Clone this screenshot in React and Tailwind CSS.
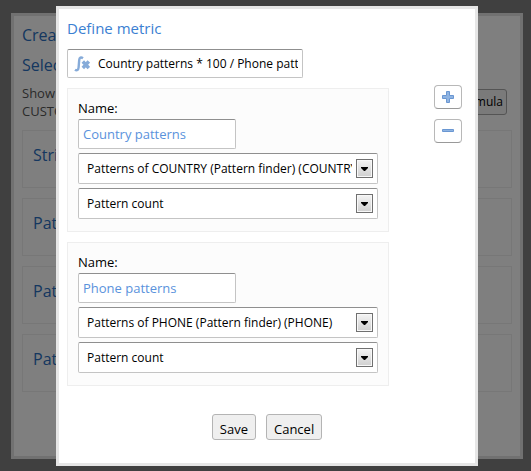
import { useId } from "react";

const cards = ["Stri", "Patt", "Patt", "Patt"];

const metrics = [
  { name: "Country patterns", source: "Patterns of COUNTRY (Pattern finder) (COUNTRY)" },
  { name: "Phone patterns", source: "Patterns of PHONE (Pattern finder) (PHONE)" },
];

const fieldBorder = "rounded-xs border border-[#c4c4c4] border-t-[#8f8f8f] bg-white";

function Dropdown({ label, value }) {
  return (
    <div className="relative mt-1">
      <select
        aria-label={label}
        defaultValue={value}
        className={`block h-[31px] w-full appearance-none pl-2 pr-[25px] text-xs text-black ${fieldBorder}`}
      >
        <option>{value}</option>
      </select>
      <span className="pointer-events-none absolute right-[5px] top-[6px] flex h-[19px] w-[17px] items-center justify-center border border-[#707070] bg-linear-to-b from-[#f4f4f4] to-[#cfcfcf] shadow-[inset_0_0_0_1px_#f8f8f8]">
        <svg width="7" height="4" viewBox="0 0 7 4" aria-hidden="true">
          <path d="M0 0h7v1L4 4H3L0 1z" fill="#000" />
        </svg>
      </span>
    </div>
  );
}

function MetricPanel({ name, source }) {
  const id = useId();
  return (
    <section className="mb-[10px] border border-[#eeeeee] bg-[#fcfcfc] px-[10px] pb-3 pt-[10px]">
      <label htmlFor={id} className="mb-px block text-[13px] leading-[19px] text-black">
        Name:
      </label>
      <input
        id={id}
        defaultValue={name}
        className={`block h-[30px] w-[158px] px-1 text-[13px] text-[#5a92dc] ${fieldBorder}`}
      />
      <Dropdown label={`${name} source`} value={source} />
      <Dropdown label={`${name} measure`} value="Pattern count" />
    </section>
  );
}

const squareButton =
  "flex h-6 w-7 items-center justify-center rounded border border-[#b8b8b8] border-b-[#999] bg-white";
const textButton =
  "h-[26px] rounded-[3px] border border-[#b4b4b4] bg-[#efefef] px-[7px] pt-1 text-[13px] leading-5 text-black";

export default function App() {
  return (
    <div className="min-h-screen bg-[#808080] pb-3 pl-[11px] pr-2 pt-[13px] font-['Open_Sans','Noto_Sans',sans-serif]">
      <div className="border-3 border-[#e2e2e2] bg-white px-2 pb-16 pt-2">
        <h1 className="text-base leading-[22px] text-[#2a6ec0]">Crea</h1>
        <h2 className="mt-2 text-base leading-[22px] text-[#2a6ec0]">Selec</h2>
        <div className="mt-2 flex items-start justify-between pr-[5px]">
          <p className="text-[13px] leading-[18px] text-[#555]">
            Show
            <br />
            CUSTO
          </p>
          <button className="mt-[5px] h-[26px] rounded-[3px] border border-[#a8a8a8] bg-[#f4f4f4] px-[3px] text-xs leading-5 text-black">
            Formula
          </button>
        </div>
        <div className="mt-[10px] flex flex-col gap-[10px]">
          {cards.map((card, i) => (
            <article key={i} className="h-[58px] border border-[#eeeeee] px-[10px] py-3">
              <h3 className="text-base leading-6 text-[#2a6ec0]">{card}</h3>
            </article>
          ))}
        </div>
      </div>

      <div className="fixed inset-0 flex items-start justify-center bg-black/50 pl-[3px] pt-[6px]">
        <div
          role="dialog"
          aria-labelledby="dialog-title"
          className="w-full max-w-[422px] border-3 border-[#e6e6e6] bg-white px-2 pb-[23px] pt-2"
        >
          <h2 id="dialog-title" className="text-[15px] leading-[22px] text-[#3b80d2]">
            Define metric
          </h2>
          <div className={`mt-[10px] flex h-[29px] w-[236px] items-center gap-2 pl-[6px] pr-1 ${fieldBorder}`}>
            <svg width="16" height="16" viewBox="0 0 16 16" fill="none" stroke="#86abd9" aria-hidden="true">
              <path d="M9 2.200C7 .8 5.400 1.500 5.200 4L4.600 11.500c-.2 2.500-1.800 3.500-3.600 2.200" strokeWidth="2.400" />
              <path d="M8.800 5.500l6 6.500M14.800 5.500l-6 6.500" strokeWidth="3.400" />
            </svg>
            <input
              aria-label="Formula"
              defaultValue="Country patterns * 100 / Phone patterns"
              className="min-w-0 flex-1 bg-transparent text-xs text-black"
            />
          </div>

          <div className="mt-[10px] flex items-start justify-between">
            <div className="w-[322px]">
              {metrics.map((metric) => (
                <MetricPanel key={metric.name} {...metric} />
              ))}
            </div>
            <div className="-mt-[3px] mr-[5px] flex flex-col gap-[10px]">
              <button aria-label="Add" className={squareButton}>
                <svg width="12" height="12" viewBox="0 0 12 12" aria-hidden="true">
                  <path d="M4.500.5h3v4h4v3h-4v4h-3v-4h-4v-3h4z" fill="#8fb4e2" stroke="#6a97d2" />
                </svg>
              </button>
              <button aria-label="Remove" className={squareButton}>
                <svg width="12" height="4" viewBox="0 0 12 4" aria-hidden="true">
                  <path d="M.5.5h11v2H.5z" fill="#8fb4e2" stroke="#6a97d2" />
                </svg>
              </button>
            </div>
          </div>

          <div className="mt-[18px] flex justify-center gap-[10px]">
            <button className={textButton}>Save</button>
            <button className={textButton}>Cancel</button>
          </div>
        </div>
      </div>
    </div>
  );
}
